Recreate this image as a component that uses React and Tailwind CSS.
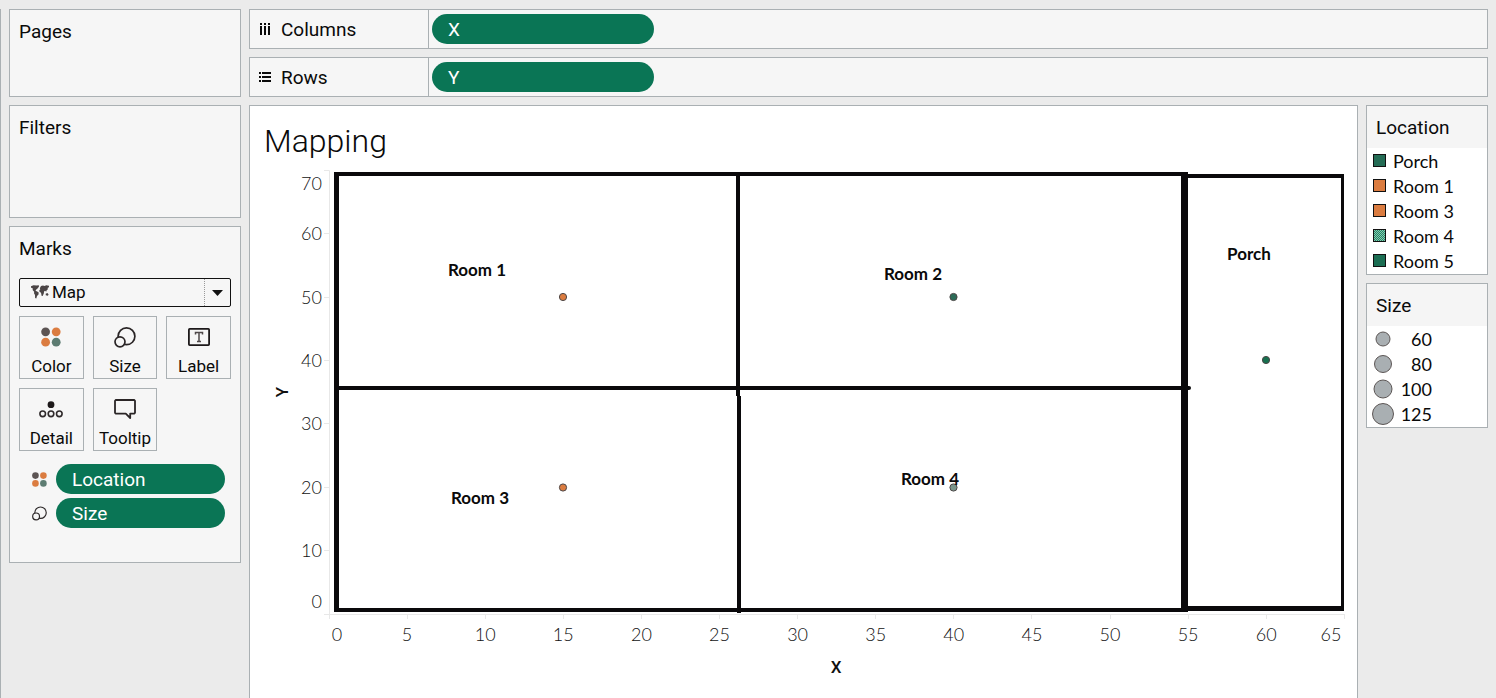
import React from "react";

const panel = "border border-[#aab0b3] bg-[#f6f6f6]";
const ORANGE = "#db7c40";

const xTicks = [0, 5, 10, 15, 20, 25, 30, 35, 40, 45, 50, 55, 60, 65];
const yTicks = [0, 10, 20, 30, 40, 50, 60, 70];
const xPos = (v) => 329 + v * 15.62;
const yPos = (v) => 614 - v * 6.34;
const xLabel = (v) => (v === 0 ? 337 : v === 65 ? 1331 : xPos(v));
const yLabel = (v) => (v === 0 ? 601 : v === 70 ? 183 : yPos(v));

const points = [
  { x: 563, y: 297, fill: ORANGE },
  { x: 953.5, y: 297, fill: "#2c6b57" },
  { x: 563, y: 487.5, fill: ORANGE },
  { x: 953.5, y: 487.5, fill: "#7a968c" },
  { x: 1266, y: 360, fill: "#17704f" },
];

const rooms = [
  { name: "Room 1", x: 477, y: 276 },
  { name: "Room 2", x: 913, y: 280 },
  { name: "Room 3", x: 480, y: 504 },
  { name: "Room 4", x: 930, y: 485 },
  { name: "Porch", x: 1249, y: 260 },
];

function FourDots({ className }) {
  return (
    <svg viewBox="0 0 20 20" className={className} aria-hidden="true">
      <circle cx="4.6" cy="4.8" r="4.4" fill="#5c5453" />
      <circle cx="15.2" cy="4.8" r="4.4" fill={ORANGE} />
      <circle cx="4.6" cy="15.2" r="4.4" fill={ORANGE} />
      <circle cx="15.2" cy="15.2" r="4.4" fill="#5d7c72" />
    </svg>
  );
}

function SizeIcon({ className }) {
  return (
    <svg viewBox="0 0 22 21" className={className} fill="#f6f6f6" stroke="#2a2526" strokeWidth="1.7" aria-hidden="true">
      <circle cx="12.5" cy="9.3" r="8.4" />
      <circle cx="6" cy="14.8" r="5" />
    </svg>
  );
}

function LabelIcon() {
  return (
    <svg viewBox="0 0 22 18" className="h-[18px] w-[22px]" fill="none" aria-hidden="true">
      <rect x="0.9" y="0.9" width="20.2" height="16.2" rx="0.8" stroke="#1d191a" strokeWidth="1.8" />
      <path d="M7.500 6.500V4.500h7v2M11 4.500v9M9 13.500h4" stroke="#4f494a" strokeWidth="1.5" />
    </svg>
  );
}

function DetailIcon() {
  return (
    <svg viewBox="0 0 24 17" className="h-[17px] w-6" fill="none" stroke="#2f2a2b" strokeWidth="1.6" aria-hidden="true">
      <circle cx="12" cy="3.7" r="3.4" fill="#1d191a" stroke="none" />
      <circle cx="3.7" cy="12.8" r="2.8" />
      <circle cx="12" cy="12.8" r="2.8" />
      <circle cx="20.3" cy="12.8" r="2.8" />
    </svg>
  );
}

function TooltipIcon() {
  return (
    <svg viewBox="0 0 22 20" className="h-5 w-[22px]" fill="none" stroke="#2a2526" strokeWidth="1.8" strokeLinejoin="round" aria-hidden="true">
      <path d="M1.800 1h18.400l.8.8v12l-.8.8H16.200v4.400l-4.400-4.400H1.800l-.8-.8v-12z" />
    </svg>
  );
}

function MapIcon({ className }) {
  return (
    <svg viewBox="0 0 18 14" className={className} fill="#4a4445" aria-hidden="true">
      <path d="M0 1.200L2.500.2l3 .3L7.800.2 8 1.500 6.800 3.300 5.300 4.600l-.8 1.200 1.700.8 1.500 1L7.500 9.500 6 11l-.7 2.500-1.200-.5L4 10 3 8.300l.2-1.500L1.800 5.200 1.500 3 0 2.800z" />
      <path d="M8.800 3.300L10 1l2-.6 1.500.5L15.300.2l2.700.6v1.400l-1.200.5-.1 1.700-1.200 1-.3 1.300-1.100-1-.9.5-.5 2.500L11.600 11h-.9L10 7.800 8.500 6.800 8.300 5.200l1-.9z" />
      <path d="M14.700 8.700l1.700-.6 1.200 1.300-.8 1.400-2-.5z" />
    </svg>
  );
}

function ColumnsIcon() {
  return (
    <svg viewBox="0 0 12 12" className="size-3" fill="#0a0a0a" aria-hidden="true">
      <path d="M1 0h2v2H1zM1 3h2v9H1zM5 0h2v2H5zM5 3h2v9H5zM9 0h2v2H9zM9 3h2v9H9z" />
    </svg>
  );
}

function RowsIcon() {
  return (
    <svg viewBox="0 0 12 12" className="size-3" fill="#0a0a0a" aria-hidden="true">
      <path d="M0 1h2v2H0zM3 1h9v2H3zM0 5h2v2H0zM3 5h9v2H3zM0 9h2v2H0zM3 9h9v2H3z" />
    </svg>
  );
}

function Shelf({ icon, name, field }) {
  return (
    <section className={`flex h-10 items-stretch ${panel}`}>
      <h2 className="flex w-[179px] items-center gap-[10px] border-r border-[#aab0b3] pl-[9px] text-[19px]">
        {icon}
        <span className="pt-0.5">{name}</span>
      </h2>
      <div className="flex items-center pl-[3px]">
        <button type="button" className="h-[30px] w-[222px] rounded-full bg-[#0a7555] px-4 pt-0.5 text-left text-[19px] text-white">
          {field}
        </button>
      </div>
    </section>
  );
}

function MarkButton({ icon, name }) {
  return (
    <button type="button" className="flex h-[63px] flex-col items-center border border-[#aab0b3] text-[17px] leading-6">
      <span className="flex h-[37px] shrink-0 items-center pt-[3px]">{icon}</span>
      {name}
    </button>
  );
}

function MarkField({ icon, name }) {
  return (
    <li className="flex items-center gap-2">
      <span className="flex w-4 justify-start">{icon}</span>
      <button type="button" className="h-[30px] w-[169px] rounded-full bg-[#0a7555] px-4 pt-0.5 text-left text-[19px] text-white">
        {name}
      </button>
    </li>
  );
}

function Swatch({ fill, hatch }) {
  return (
    <svg viewBox="0 0 13 13" className="size-[13px]" aria-hidden="true">
      <defs>
        <pattern id="hatch" width="2" height="2" patternUnits="userSpaceOnUse">
          <path d="M0 0h1v1H0zM1 1h1v1H1z" fill="#8cc4b0" />
        </pattern>
      </defs>
      <rect x="0.5" y="0.5" width="12" height="12" fill={fill} />
      {hatch && <rect x="1" y="1" width="11" height="11" fill="url(#hatch)" />}
      <rect x="0.5" y="0.5" width="12" height="12" fill="none" stroke="#111" />
    </svg>
  );
}

const locations = [
  { name: "Porch", fill: "#246c55" },
  { name: "Room 1", fill: ORANGE },
  { name: "Room 3", fill: ORANGE },
  { name: "Room 4", fill: "#1f8a66", hatch: true },
  { name: "Room 5", fill: "#1b6e53" },
];

const sizes = [
  { value: 60, r: 7 },
  { value: 80, r: 8.5 },
  { value: 100, r: 9 },
  { value: 125, r: 10.5 },
];

function Legend({ title, children }) {
  return (
    <section className="border border-[#aab0b3] bg-white">
      <h2 className="flex h-[42px] items-center bg-[#f5f5f5] pl-[9px] pt-0.5 text-[19px]">{title}</h2>
      <ul className="pb-px font-['Lato',sans-serif] text-[18px] leading-[25px]">{children}</ul>
    </section>
  );
}

function Chart() {
  return (
    <svg viewBox="250 165 1107 533" className="block h-auto w-full" role="img" aria-label="Map of points by X and Y">
      <g stroke="#e8e8e8" fill="none">
        <path d="M324 170.500h5.500V619M324 614.500h1020.500" />
        {yTicks.slice(1, 7).map((v) => (
          <path key={v} d={`M324 ${Math.floor(yPos(v)) + 0.5}h5`} />
        ))}
        {xTicks.map((v) => (
          <path key={v} d={`M${Math.floor(xPos(v)) + 0.5} 614v5`} />
        ))}
      </g>
      <g fill="#0a090b">
        <path d="M334 172h854v440H334zM339 176v432h842V176z" fillRule="evenodd" />
        <path d="M736 174h4v222h-4zM737 396h4v217h-4z" />
        <path d="M336 386h853a2 2 0 0 1 0 4H336z" />
        <path d="M1188 174h156v437h-156v-5h153V178h-153z" />
      </g>
      <g className="font-['Lato',sans-serif]" fontSize="18" fontWeight="300" fill="#111">
        {yTicks.map((v) => (
          <text key={v} x="322" y={Math.floor(yLabel(v)) + 7} textAnchor="end">{v}</text>
        ))}
        {xTicks.map((v) => (
          <text key={v} x={xLabel(v)} y="641" textAnchor="middle">{v}</text>
        ))}
      </g>
      <g fontSize="17" fontWeight="500" fill="#111" textAnchor="middle" className="font-['Roboto',sans-serif]">
        <text x="836" y="673">X</text>
        <text transform="translate(288 392) rotate(-90)">Y</text>
      </g>
      {points.map((p) => (
        <circle key={`${p.x}-${p.y}`} cx={p.x} cy={p.y} r="3.6" fill={p.fill} stroke="#4c4646" />
      ))}
      <g className="font-['Lato',sans-serif]" fontSize="17" fontWeight="700" fill="#0a0a0a" textAnchor="middle">
        {rooms.map((r) => (
          <text key={r.name} x={r.x} y={r.y}>{r.name}</text>
        ))}
      </g>
    </svg>
  );
}

export default function App() {
  return (
    <div className="min-h-screen bg-[#ebebeb] pt-[9px] font-['Roboto',sans-serif] text-[#0a0a0a]">
      <div className="flex min-h-[calc(100vh-9px)] gap-2 border-l border-[#aab0b3] pl-2 pr-2">
        <aside className="flex w-[232px] shrink-0 flex-col gap-2">
          <section className={`h-[88px] px-[9px] pt-2 ${panel}`}>
            <h2 className="text-[19px] leading-7">Pages</h2>
          </section>
          <section className={`h-[113px] px-[9px] pt-2 ${panel}`}>
            <h2 className="text-[19px] leading-7">Filters</h2>
          </section>
          <section className={`px-[9px] pb-[34px] pt-2 ${panel}`}>
            <h2 className="text-[19px] leading-7">Marks</h2>
            <div className="relative mt-[15px]">
              <select aria-label="Mark type" className="block h-[29px] w-full appearance-none rounded-[2px] border border-[#111] bg-transparent pl-8 text-[17px]">
                <option>Map</option>
              </select>
              <MapIcon className="pointer-events-none absolute left-3 top-[7px] h-[14px] w-[18px]" />
              <span className="pointer-events-none absolute inset-y-px right-[1px] flex w-[26px] items-center justify-center border-l border-dotted border-[#999]">
                <svg viewBox="0 0 11 6" className="h-[6px] w-[11px]" aria-hidden="true">
                  <path d="M0 0h11L5.500 6z" fill="#111" />
                </svg>
              </span>
            </div>
            <div className="mt-[9px] grid grid-cols-3 gap-[9px]">
              <MarkButton icon={<FourDots className="size-5" />} name="Color" />
              <MarkButton icon={<SizeIcon className="h-[21px] w-[22px]" />} name="Size" />
              <MarkButton icon={<LabelIcon />} name="Label" />
              <MarkButton icon={<DetailIcon />} name="Detail" />
              <MarkButton icon={<TooltipIcon />} name="Tooltip" />
            </div>
            <ul className="mt-[13px] flex flex-col gap-1 pl-[13px]">
              <MarkField icon={<FourDots className="size-[15px]" />} name="Location" />
              <MarkField icon={<SizeIcon className="size-[15px]" />} name="Size" />
            </ul>
          </section>
        </aside>
        <div className="flex min-w-0 flex-1 flex-col gap-2">
          <Shelf icon={<ColumnsIcon />} name="Columns" field="X" />
          <Shelf icon={<RowsIcon />} name="Rows" field="Y" />
          <div className="flex flex-1 gap-2">
            <main className="min-w-0 flex-1 border border-b-0 border-[#aab0b3] bg-white">
              <h1 className="h-[59px] pl-[14px] pt-[15px] text-[32px] font-light leading-10">Mapping</h1>
              <Chart />
            </main>
            <aside className="flex w-[122px] shrink-0 flex-col gap-2">
              <Legend title="Location">
                {locations.map((l) => (
                  <li key={l.name} className="flex h-[25px] items-center gap-[7px] pl-[6px]">
                    <Swatch fill={l.fill} hatch={l.hatch} />
                    <span className="pt-px">{l.name}</span>
                  </li>
                ))}
              </Legend>
              <Legend title="Size">
                {sizes.map((s) => (
                  <li key={s.value} className="flex h-[25px] items-center pl-[5px]">
                    <svg viewBox="0 0 22 22" className="size-[22px]" aria-hidden="true">
                      <circle cx="11" cy="11" r={s.r} fill="#a9afb2" stroke="#5c5655" />
                    </svg>
                    <span className="w-[38px] pt-px text-right">{s.value}</span>
                  </li>
                ))}
              </Legend>
            </aside>
          </div>
        </div>
      </div>
    </div>
  );
}
